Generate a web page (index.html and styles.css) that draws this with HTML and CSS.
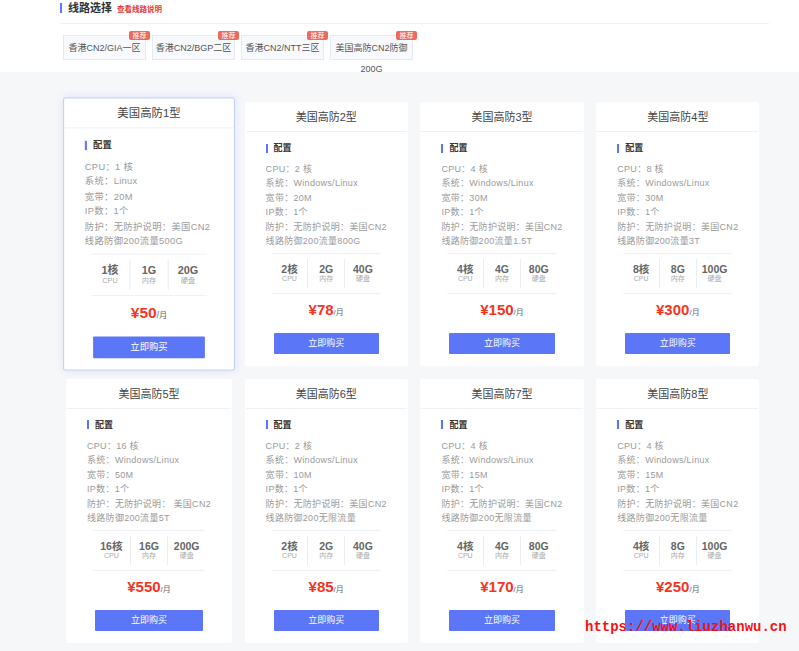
FILE: index.html
```html
<html>
<head>
	<meta charset="utf-8">
	<meta name="viewport" content="width=device-width, initial-scale=1">
	<title>线路选择</title>
	<link rel="stylesheet" href="styles.css">
</head>
<body>

	<div class="line-box">
		<div class="line-head">
			<span class="bar"></span>
			<h3>线路选择</h3>
			<a class="tip">查看线路说明</a>
		</div>
		<div class="tabs">
			<div class="tab">香港CN2/GIA一区<span class="tag">推荐</span></div>
			<div class="tab">香港CN2/BGP二区<span class="tag">推荐</span></div>
			<div class="tab">香港CN2/NTT三区<span class="tag">推荐</span></div>
			<div class="tab">美国高防CN2防御200G<span class="tag">推荐</span></div>
		</div>
	</div>

	<div class="plans">

		<div class="plan on">
			<div class="plan-title">美国高防1型</div>
			<div class="plan-body">
				<div class="cfg">配置</div>
				<ul class="spec">
					<li>CPU：1 核</li>
					<li>系统：Linux</li>
					<li>宽带：20M</li>
					<li>IP数：1个</li>
					<li>防护：无防护说明：美国CN2</li>
					<li>线路防御200流量500G</li>
				</ul>
				<div class="stats">
					<div><b>1核</b><span>CPU</span></div>
					<div><b>1G</b><span>内存</span></div>
					<div><b>20G</b><span>硬盘</span></div>
				</div>
				<div class="price">¥50<small>/月</small></div>
				<a class="buy">立即购买</a>
			</div>
		</div>

		<div class="plan">
			<div class="plan-title">美国高防2型</div>
			<div class="plan-body">
				<div class="cfg">配置</div>
				<ul class="spec">
					<li>CPU：2 核</li>
					<li>系统：Windows/Linux</li>
					<li>宽带：20M</li>
					<li>IP数：1个</li>
					<li>防护：无防护说明：美国CN2</li>
					<li>线路防御200流量800G</li>
				</ul>
				<div class="stats">
					<div><b>2核</b><span>CPU</span></div>
					<div><b>2G</b><span>内存</span></div>
					<div><b>40G</b><span>硬盘</span></div>
				</div>
				<div class="price">¥78<small>/月</small></div>
				<a class="buy">立即购买</a>
			</div>
		</div>

		<div class="plan">
			<div class="plan-title">美国高防3型</div>
			<div class="plan-body">
				<div class="cfg">配置</div>
				<ul class="spec">
					<li>CPU：4 核</li>
					<li>系统：Windows/Linux</li>
					<li>宽带：30M</li>
					<li>IP数：1个</li>
					<li>防护：无防护说明：美国CN2</li>
					<li>线路防御200流量1.5T</li>
				</ul>
				<div class="stats">
					<div><b>4核</b><span>CPU</span></div>
					<div><b>4G</b><span>内存</span></div>
					<div><b>80G</b><span>硬盘</span></div>
				</div>
				<div class="price">¥150<small>/月</small></div>
				<a class="buy">立即购买</a>
			</div>
		</div>

		<div class="plan">
			<div class="plan-title">美国高防4型</div>
			<div class="plan-body">
				<div class="cfg">配置</div>
				<ul class="spec">
					<li>CPU：8 核</li>
					<li>系统：Windows/Linux</li>
					<li>宽带：30M</li>
					<li>IP数：1个</li>
					<li>防护：无防护说明：美国CN2</li>
					<li>线路防御200流量3T</li>
				</ul>
				<div class="stats">
					<div><b>8核</b><span>CPU</span></div>
					<div><b>8G</b><span>内存</span></div>
					<div><b>100G</b><span>硬盘</span></div>
				</div>
				<div class="price">¥300<small>/月</small></div>
				<a class="buy">立即购买</a>
			</div>
		</div>

		<div class="plan">
			<div class="plan-title">美国高防5型</div>
			<div class="plan-body">
				<div class="cfg">配置</div>
				<ul class="spec">
					<li>CPU：16 核</li>
					<li>系统：Windows/Linux</li>
					<li>宽带：50M</li>
					<li>IP数：1个</li>
					<li>防护：无防护说明： 美国CN2</li>
					<li>线路防御200流量5T</li>
				</ul>
				<div class="stats">
					<div><b>16核</b><span>CPU</span></div>
					<div><b>16G</b><span>内存</span></div>
					<div><b>200G</b><span>硬盘</span></div>
				</div>
				<div class="price">¥550<small>/月</small></div>
				<a class="buy">立即购买</a>
			</div>
		</div>

		<div class="plan">
			<div class="plan-title">美国高防6型</div>
			<div class="plan-body">
				<div class="cfg">配置</div>
				<ul class="spec">
					<li>CPU：2 核</li>
					<li>系统：Windows/Linux</li>
					<li>宽带：10M</li>
					<li>IP数：1个</li>
					<li>防护：无防护说明：美国CN2</li>
					<li>线路防御200无限流量</li>
				</ul>
				<div class="stats">
					<div><b>2核</b><span>CPU</span></div>
					<div><b>2G</b><span>内存</span></div>
					<div><b>40G</b><span>硬盘</span></div>
				</div>
				<div class="price">¥85<small>/月</small></div>
				<a class="buy">立即购买</a>
			</div>
		</div>

		<div class="plan">
			<div class="plan-title">美国高防7型</div>
			<div class="plan-body">
				<div class="cfg">配置</div>
				<ul class="spec">
					<li>CPU：4 核</li>
					<li>系统：Windows/Linux</li>
					<li>宽带：15M</li>
					<li>IP数：1个</li>
					<li>防护：无防护说明：美国CN2</li>
					<li>线路防御200无限流量</li>
				</ul>
				<div class="stats">
					<div><b>4核</b><span>CPU</span></div>
					<div><b>4G</b><span>内存</span></div>
					<div><b>80G</b><span>硬盘</span></div>
				</div>
				<div class="price">¥170<small>/月</small></div>
				<a class="buy">立即购买</a>
			</div>
		</div>

		<div class="plan">
			<div class="plan-title">美国高防8型</div>
			<div class="plan-body">
				<div class="cfg">配置</div>
				<ul class="spec">
					<li>CPU：4 核</li>
					<li>系统：Windows/Linux</li>
					<li>宽带：15M</li>
					<li>IP数：1个</li>
					<li>防护：无防护说明：美国CN2</li>
					<li>线路防御200无限流量</li>
				</ul>
				<div class="stats">
					<div><b>4核</b><span>CPU</span></div>
					<div><b>8G</b><span>内存</span></div>
					<div><b>100G</b><span>硬盘</span></div>
				</div>
				<div class="price">¥250<small>/月</small></div>
				<a class="buy">立即购买</a>
			</div>
		</div>

	</div>

	<div class="mark">https://www.liuzhanwu.cn</div>

</body>
</html>
```

FILE: styles.css
```css
*{
	box-sizing: border-box;
	padding: 0;
	margin: 0;
}
body
{
	font-family: "Liberation Sans", "Noto Sans CJK SC", sans-serif;
	background: #f6f7f9;
	color: #333;
	position: relative;
}
.line-box
{
	background: #fff;
	height: 72px;
	padding: 0 30px 0 60px;
}
.line-head
{
	display: flex;
	align-items: center;
	height: 24px;
	padding-bottom: 7px;
	border-bottom: 1px solid #eef0f3;
}
.line-head .bar
{
	width: 2px;
	height: 10px;
	background: #5b76f7;
	margin-right: 6px;
}
.line-head h3
{
	font-size: 11px;
	line-height: 16px;
	font-weight: bold;
	color: #333;
}
.line-head .tip
{
	font-size: 7.5px;
	font-weight: bold;
	color: #e4393c;
	margin-left: 5px;
	margin-top: 1px;
}
.tabs
{
	display: flex;
	gap: 6px;
	margin-top: 11px;
	padding-left: 3px;
}
.tab
{
	position: relative;
	width: 83px;
	height: 25px;
	padding: 1.5px 1px;
	border: 1px solid #e4e9f2;
	background: #f8f9fc;
	font-size: 9px;
	line-height: 21px;
	color: #555;
	text-align: center;
}
.tab .tag
{
	position: absolute;
	top: -5px;
	right: -5px;
	width: 21px;
	height: 9px;
	border-radius: 2px;
	background: #eb6a5c;
	color: #fff;
	font-size: 7px;
	line-height: 9px;
	text-align: center;
}
.plans
{
	display: grid;
	grid-template-columns: repeat(4, 1fr);
	gap: 13px 12.6px;
	width: 692px;
	margin-left: 66px;
	padding-top: 30px;
}
.plan
{
	background: #fff;
	border: 1px solid #fff;
	border-radius: 2px;
}
.plan.on
{
	transform: scale(1.035);
	border-color: #c2cefa;
	box-shadow: 0 0 8px rgba(91, 118, 247, 0.15);
}
.plan-title
{
	height: 29px;
	line-height: 29px;
	border-bottom: 1px solid #eef0f5;
	text-align: center;
	font-size: 11px;
	color: #444;
}
.plan-body
{
	padding: 9px 20px 11px;
}
.cfg
{
	display: flex;
	align-items: center;
	font-size: 9px;
	font-weight: bold;
	line-height: 14px;
	color: #333;
}
.cfg::before
{
	content: "";
	width: 2px;
	height: 9px;
	background: #5b76f7;
	margin-right: 6px;
}
.spec
{
	list-style: none;
	margin-top: 7px;
}
.spec li
{
	font-size: 9px;
	line-height: 14.4px;
	color: #9a9a9a;
	letter-spacing: 0.3px;
	white-space: nowrap;
}
.stats
{
	display: flex;
	margin: 4.5px 6px 0;
	padding: 5px 0;
	border-top: 1px solid #eff1f5;
	border-bottom: 1px solid #eff1f5;
}
.stats div
{
	flex: 1;
	text-align: center;
	padding: 4px 0 5px;
}
.stats div + div
{
	border-left: 1px solid #e8ecf3;
}
.stats b
{
	display: block;
	font-size: 10.5px;
	line-height: 12px;
	color: #666;
}
.stats span
{
	display: block;
	font-size: 7px;
	line-height: 8px;
	color: #aaa;
}
.price
{
	margin-top: 6px;
	height: 20px;
	text-align: center;
	font-size: 15px;
	font-weight: bold;
	line-height: 20px;
	color: #f5351f;
}
.price small
{
	font-size: 8px;
	font-weight: normal;
	line-height: 1;
	color: #666;
}
.buy
{
	display: block;
	margin: 13px 8px 0;
	height: 21px;
	line-height: 21px;
	background: #5b76f7;
	color: #fff;
	font-size: 9px;
	text-align: center;
	border-radius: 1px;
}
.mark
{
	position: absolute;
	left: 585px;
	top: 619px;
	font-family: "Liberation Mono", monospace;
	font-size: 14px;
	font-weight: bold;
	color: #f01414;
}
```
